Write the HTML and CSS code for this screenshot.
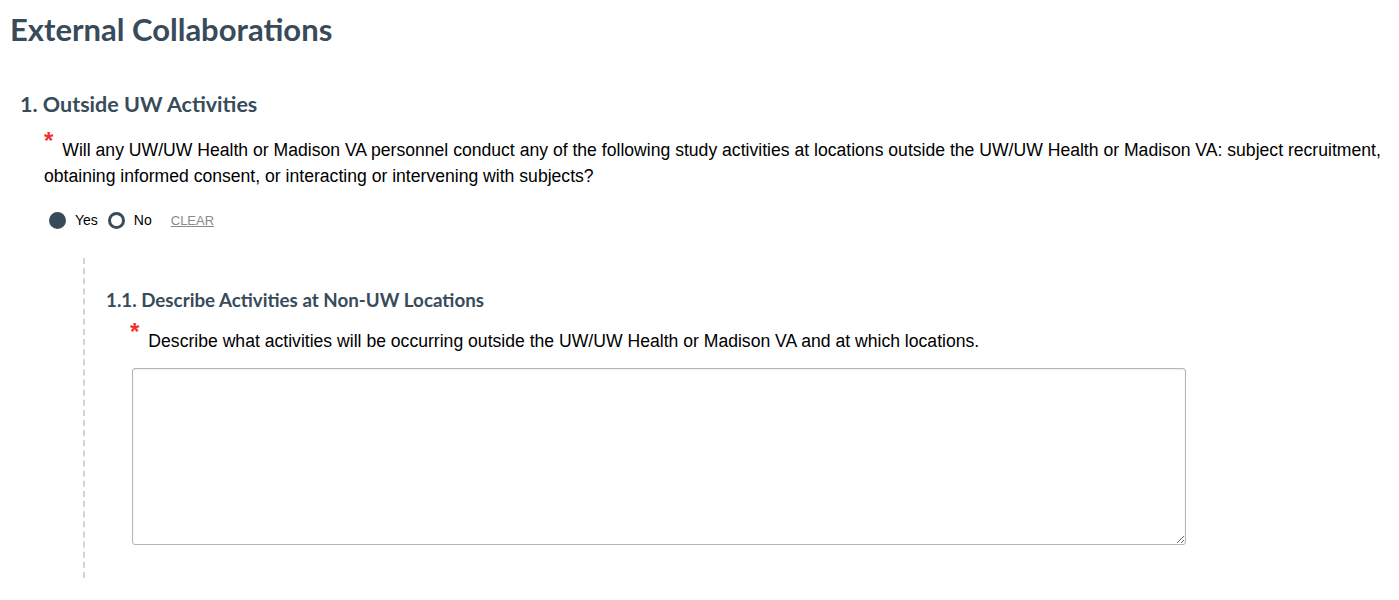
FILE: index.html
```html
<!DOCTYPE html>
<html>
<head>
<meta charset="utf-8">
<link rel="stylesheet" href="styles.css">
</head>
<body>
<main class="page">
  <h1 class="page-title">External Collaborations</h1>
  <section class="question">
    <h2 class="q-title">1. Outside UW Activities</h2>
    <div class="q-body">
      <p class="prompt"><span class="req">*</span>Will any UW/UW Health or Madison VA personnel conduct any of the following study activities at locations outside the UW/UW Health or Madison VA: subject recruitment, obtaining informed consent, or interacting or intervening with subjects?</p>
      <div class="radios">
        <label class="radio"><span class="dot dot-on"></span>Yes</label>
        <label class="radio"><span class="dot"></span>No</label>
        <a class="clear">CLEAR</a>
      </div>
    </div>
    <div class="sub">
      <h3 class="sub-title">1.1. Describe Activities at Non-UW Locations</h3>
      <div class="sub-body">
        <p class="prompt"><span class="req">*</span>Describe what activities will be occurring outside the UW/UW Health or Madison VA and at which locations.</p>
        <textarea class="answer"></textarea>
      </div>
    </div>
  </section>
</main>
</body>
</html>
```
FILE: styles.css
```css
html, body { margin: 0; padding: 0; background: #fff; }
body { font-family: "Liberation Sans", Arial, sans-serif; color: #000; }
.page { padding: 9px 9px 0 10px; }
.page-title {
  font-family: Lato, "Noto Sans", sans-serif;
  font-weight: 700;
  font-size: 31px;
  line-height: 40px;
  color: #384b5a;
  margin: 0;
}
.question { padding-left: 10px; margin-top: 42px; }
.q-title {
  font-family: Lato, "Noto Sans", sans-serif;
  font-weight: 700;
  font-size: 21.5px;
  line-height: 26px;
  color: #384b5a;
  margin: 0;
}
.q-body { padding-left: 24px; margin-top: 20px; }
.prompt {
  margin: 0;
  font-size: 17.6px;
  line-height: 26px;
}
.req {
  color: #f0302f;
  font-size: 24px;
  font-weight: 700;
  line-height: 20px;
  position: relative;
  top: -7px;
  margin-right: 9px;
}
.radios {
  display: flex;
  align-items: center;
  height: 20px;
  margin-top: 21px;
  padding-left: 5px;
  font-size: 14px;
}
.radio { display: flex; align-items: center; margin-right: 10px; }
.dot {
  width: 11px; height: 11px;
  border: 3px solid #384b5a;
  border-radius: 50%;
  margin-right: 9px;
  box-sizing: content-box;
}
.dot-on { background: #384b5a; }
.clear {
  color: #8a8a8a;
  text-decoration: underline;
  font-size: 13px;
  margin-left: 9px;
}
.sub {
  margin: 28px 0 0 63px;
  border-left: 2px dashed #d4d4d4;
  padding: 30px 0 33px 21px;
}
.sub-title {
  font-family: Lato, "Noto Sans", sans-serif;
  font-weight: 700;
  font-size: 18.75px;
  line-height: 24px;
  color: #384b5a;
  margin: 0;
}
.sub-body { padding-left: 24px; margin-top: 16px; }
.answer {
  display: block;
  margin: 14px 0 0 2px;
  width: 1054px;
  height: 177px;
  box-sizing: border-box;
  border: 1px solid #b5b5b5;
  border-radius: 3px;
  box-shadow: inset 0 1px 2px rgba(0,0,0,0.08);
}
```
